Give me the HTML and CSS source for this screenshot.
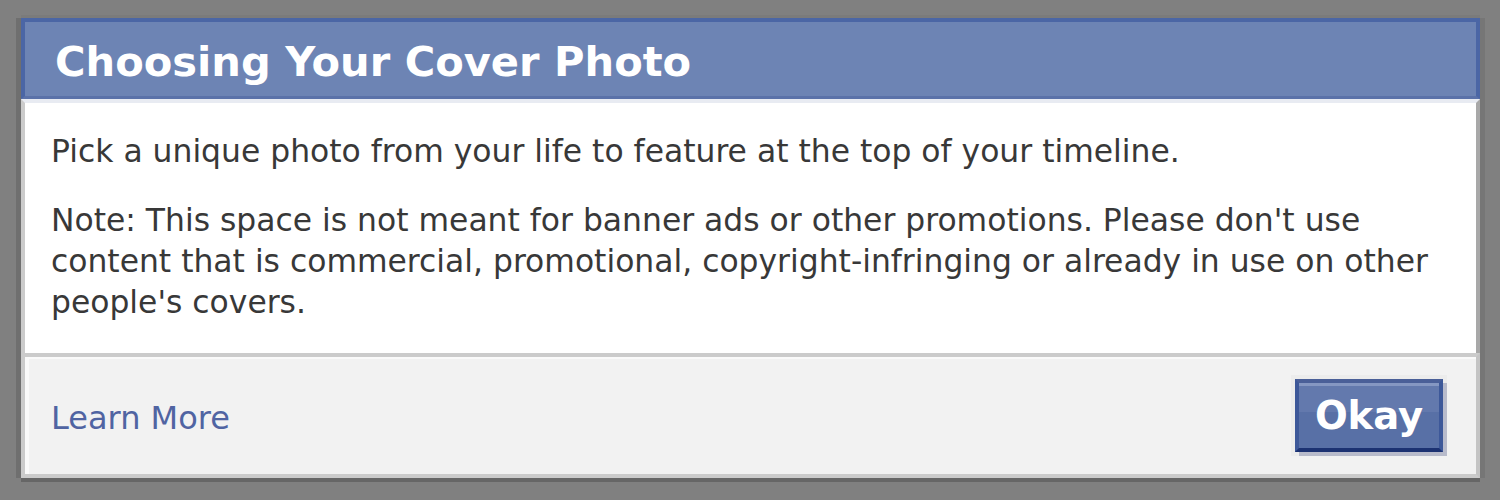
FILE: index.html
```html
<html>

<head>

<title>Choosing Your Cover Photo</title>

<link rel="stylesheet" href="styles.css">

</head>

<body>

<div class="dialog">

<h2 class="dialog-title">Choosing Your Cover Photo</h2>

<div class="dialog-body">

<p>Pick a unique photo from your life to feature at the top of your timeline.</p>

<p>Note: This space is not meant for banner ads or other promotions. Please don't use
content that is commercial, promotional, copyright-infringing or already in use on other
people's covers.</p>

</div>

<div class="dialog-footer">
<a class="learn-more" href="#">Learn More</a>
<button class="okay">Okay</button>
</div>

</div>

</body>

</html>
```

FILE: styles.css
```css
body {
   margin: 0;
   padding: 18px 20px 0 21px;
   background: #808080;
   font-family: "DejaVu Sans", Verdana, sans-serif; }

.dialog {
   width: 1459px;
   box-shadow: 0 4px 0 #666, -5px 0 0 #6f6f6f, 5px 0 0 #767676, 0 -3px 0 #7b7b7b; }

.dialog-title {
   margin: 0;
   padding: 16px 28px 10px 30px;
   border: 4px solid #4b66a5;
   border-bottom: 3px solid #5b72a9;
   background: #6d84b4;
   color: #fff;
   font-size: 41.6px;
   font-weight: bold;
   line-height: 48px; }

.dialog-body {
   padding: 28px 30px 30px 26px;
   border-top: 4px solid #e8ebf2;
   border-left: 4px solid #cbcbcb;
   border-right: 4px solid #a8a8a8;
   background: #fff; }

.dialog-body p {
   margin: 0;
   color: #383838;
   font-size: 31.4px;
   line-height: 41px; }

.dialog-body p + p {
   margin-top: 28px; }

.dialog-footer {
   display: flex;
   justify-content: space-between;
   align-items: baseline;
   padding: 22px 33px 22px 26px;
   border: 4px solid #cbcbcb;
   border-right-color: #c4c4c4;
   background: #f2f2f2;
   box-shadow: inset 4px 2px 0 #fafafa; }

.learn-more {
   color: #5064a2;
   font-size: 32px;
   line-height: 41px;
   text-decoration: none; }

.okay {
   width: 148px;
   height: 73px;
   padding: 0;
   border: 4px solid #3d5899;
   border-top-color: #4a5f98;
   border-bottom-color: #1c3272;
   background: linear-gradient(#6379ad 0, #6379ad 44%, #5870a6 44%, #5870a6 100%);
   box-shadow: inset 0 3px 0 #8597c2, 4px 4px 0 #b8bbcb, 0 0 0 4px #ececec;
   color: #fff;
   font-family: "DejaVu Sans", Verdana, sans-serif;
   font-size: 38.5px;
   font-weight: bold;
   line-height: 65px; }
```
